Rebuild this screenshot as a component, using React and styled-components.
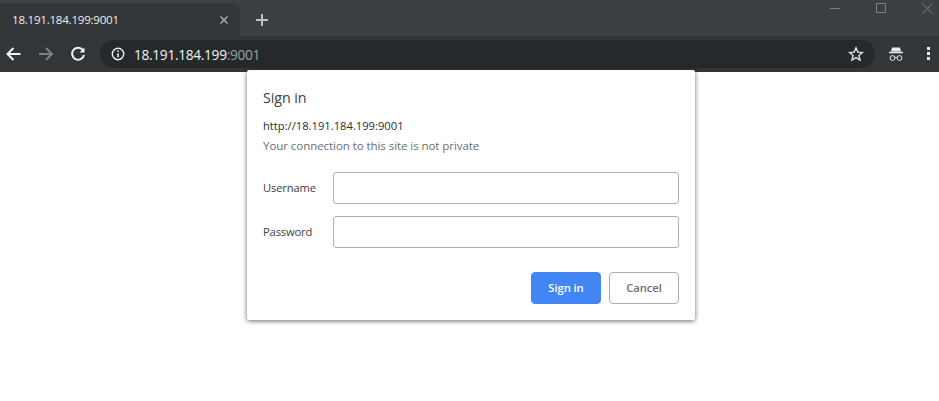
import React from "react";
import styled, { createGlobalStyle } from "styled-components";

const Global = createGlobalStyle`
  html, body { margin: 0; padding: 0; background: #fff; }
  body { font-family: "Open Sans", "Noto Sans", "Liberation Sans", sans-serif; overflow: hidden; }
  * { box-sizing: border-box; }
`;

const Page = styled.div`
  width: 939px;
  height: 401px;
  position: relative;
  display: flex;
  flex-direction: column;
`;

const TitleBar = styled.div`
  height: 36px;
  background: #3c4043;
  display: flex;
  align-items: flex-end;
  position: relative;
`;

const Tab = styled.div`
  width: 240px;
  height: 33px;
  background: #323639;
  border-radius: 0 8px 0 0;
  display: flex;
  align-items: center;
  padding: 0 11px 0 12px;
  justify-content: space-between;
  color: #eee;
  font-size: 11.6px;
  letter-spacing: -0.25px;
`;

const NewTab = styled.div`
  margin-left: 15px;
  width: 18px;
  height: 33px;
  display: flex;
  align-items: center;
`;

const WindowControls = styled.div`
  position: absolute;
  right: 6px;
  top: 3px;
  display: flex;
  align-items: center;
  gap: 35px;
`;

const ToolBar = styled.div`
  height: 36px;
  background: #323639;
  display: flex;
  align-items: center;
  padding: 0 0 0 6px;
`;

const NavIcon = styled.div`
  width: 16px;
  height: 16px;
  margin-right: ${(p) => p.$gap}px;
  display: flex;
`;

const Omnibox = styled.div`
  width: 775px;
  height: 28px;
  margin-left: 14px;
  border-radius: 14px;
  background: #26292c;
  display: flex;
  align-items: center;
  padding: 0 11px 0 11px;
`;

const UrlText = styled.div`
  margin-left: 9px;
  flex: 1;
  font-size: 13.7px;
  letter-spacing: -0.3px;
  color: #f1f3f4;
`;

const UrlPort = styled.span`
  color: #9aa0a6;
`;

const ToolEnd = styled.div`
  display: flex;
  align-items: center;
  margin-left: 14px;
  gap: 23px;
`;

const Content = styled.div`
  flex: 1;
  background: #fff;
`;

const Dialog = styled.div`
  position: absolute;
  left: 247px;
  top: 70px;
  width: 448px;
  height: 250px;
  background: #fff;
  border-radius: 2px;
  box-shadow: 0 1px 5px rgba(0, 0, 0, 0.6);
  padding: 18px 16px 16px 16px;
  display: flex;
  flex-direction: column;
`;

const Title = styled.div`
  font-size: 14.3px;
  line-height: 20px;
  color: #3c4043;
  letter-spacing: -0.1px;
`;

const Origin = styled.div`
  font-size: 11.2px;
  line-height: 16px;
  margin-top: 10px;
  color: #2b2d30;
  letter-spacing: 0;
`;

const Note = styled.div`
  font-size: 11.6px;
  line-height: 16px;
  margin-top: 4px;
  color: #6b6f73;
  letter-spacing: -0.1px;
`;

const Fields = styled.div`
  display: flex;
  flex-direction: column;
  gap: 12px;
  margin-top: 18px;
`;

const FieldRow = styled.label`
  display: flex;
  align-items: center;
  height: 32px;
`;

const FieldLabel = styled.span`
  width: 70px;
  padding-bottom: 2px;
  font-size: 11.2px;
  color: #3c4043;
  letter-spacing: -0.15px;
`;

const Input = styled.div`
  width: 346px;
  height: 32px;
  border: 1px solid #b0b0b0;
  border-radius: 3px;
  background: #fff;
`;

const Actions = styled.div`
  display: flex;
  justify-content: flex-end;
  gap: 8px;
  margin-top: auto;
`;

const Button = styled.div`
  width: 70px;
  height: 32px;
  border-radius: 4px;
  display: flex;
  align-items: center;
  justify-content: center;
  padding-bottom: 1px;
  font-size: 11.3px;
  font-weight: 600;
  letter-spacing: -0.1px;
  background: ${(p) => (p.$primary ? "#4285f4" : "#fff")};
  color: ${(p) => (p.$primary ? "#fff" : "#6b6f73")};
  border: 1px solid ${(p) => (p.$primary ? "#4285f4" : "#b0b0b0")};
`;

export default function App() {
  return (
    <Page>
      <Global />
      <TitleBar>
        <Tab>
          <span>18.191.184.199:9001</span>
          <svg width="10" height="10" viewBox="0 0 10 10">
            <path d="M1.5 1.5l7 7M8.500 1.500l-7 7" stroke="#a9acaf" strokeWidth="1.5" />
          </svg>
        </Tab>
        <NewTab>
          <svg width="14" height="14" viewBox="0 0 14 14">
            <path d="M7 1v12M1 7h12" stroke="#bdc1c6" strokeWidth="2" />
          </svg>
        </NewTab>
        <WindowControls>
          <svg width="11" height="11" viewBox="0 0 11 11">
            <path d="M0 5.500h10" stroke="#7d8184" strokeWidth="1" />
          </svg>
          <svg width="11" height="11" viewBox="0 0 11 11">
            <rect x="0.500" y="0.500" width="9" height="9" fill="none" stroke="#7d8184" />
          </svg>
          <svg width="11" height="11" viewBox="0 0 11 11">
            <path d="M0.500 0.500l10 10M10.500 0.500l-10 10" stroke="#7d8184" />
          </svg>
        </WindowControls>
      </TitleBar>
      <ToolBar>
        <NavIcon $gap={16}>
          <svg width="16" height="16" viewBox="0 0 16 16">
            <path d="M14.500 8H2M7.500 2l-6 6 6 6" fill="none" stroke="#f1f3f4" strokeWidth="2" />
          </svg>
        </NavIcon>
        <NavIcon $gap={16}>
          <svg width="16" height="16" viewBox="0 0 16 16">
            <path d="M1 8h12.500M8 2l6 6-6 6" fill="none" stroke="#7c8083" strokeWidth="2" />
          </svg>
        </NavIcon>
        <NavIcon $gap={0}>
          <svg width="16" height="16" viewBox="0 0 16 16">
            <path d="M13.200 4.500A6 6 0 1 0 14 9" fill="none" stroke="#f1f3f4" strokeWidth="2" />
            <path d="M14.500 1.500v5h-5z" fill="#f1f3f4" />
          </svg>
        </NavIcon>
        <Omnibox>
          <svg width="14" height="14" viewBox="0 0 14 14">
            <circle cx="7" cy="7" r="5.700" fill="none" stroke="#f1f3f4" strokeWidth="1.400" />
            <path d="M7 6.200v4M7 3.600v1.500" stroke="#f1f3f4" strokeWidth="1.500" />
          </svg>
          <UrlText>
            18.191.184.199<UrlPort>:9001</UrlPort>
          </UrlText>
          <svg width="16" height="16" viewBox="0 0 16 16">
            <path
              d="M8 1.800l1.800 4.300 4.600.4-3.500 3 1.100 4.500L8 11.600l-4 2.400 1.100-4.500-3.500-3 4.600-.4z"
              fill="none"
              stroke="#dfe1e3"
              strokeWidth="1.400"
            />
          </svg>
        </Omnibox>
        <ToolEnd>
          <svg width="14" height="16" viewBox="0 0 14 16">
            <path d="M3 1.500h8l1 4H2z" fill="#e8eaed" />
            <path d="M0 6.500h14" stroke="#e8eaed" strokeWidth="1.500" />
            <circle cx="3.500" cy="12" r="2.400" fill="none" stroke="#e8eaed" strokeWidth="1" />
            <circle cx="10.500" cy="12" r="2.400" fill="none" stroke="#e8eaed" strokeWidth="1" />
            <path d="M6 11.500h2" stroke="#e8eaed" />
          </svg>
          <svg width="4" height="14" viewBox="0 0 4 14">
            <rect x="1" y="0" width="3" height="3" fill="#eceef0" />
            <rect x="1" y="5" width="3" height="3" fill="#eceef0" />
            <rect x="1" y="10" width="3" height="3" fill="#eceef0" />
          </svg>
        </ToolEnd>
      </ToolBar>
      <Content />
      <Dialog>
        <Title>Sign in</Title>
        <Origin>http://18.191.184.199:9001</Origin>
        <Note>Your connection to this site is not private</Note>
        <Fields>
          <FieldRow>
            <FieldLabel>Username</FieldLabel>
            <Input />
          </FieldRow>
          <FieldRow>
            <FieldLabel>Password</FieldLabel>
            <Input />
          </FieldRow>
        </Fields>
        <Actions>
          <Button $primary>Sign in</Button>
          <Button>Cancel</Button>
        </Actions>
      </Dialog>
    </Page>
  );
}
